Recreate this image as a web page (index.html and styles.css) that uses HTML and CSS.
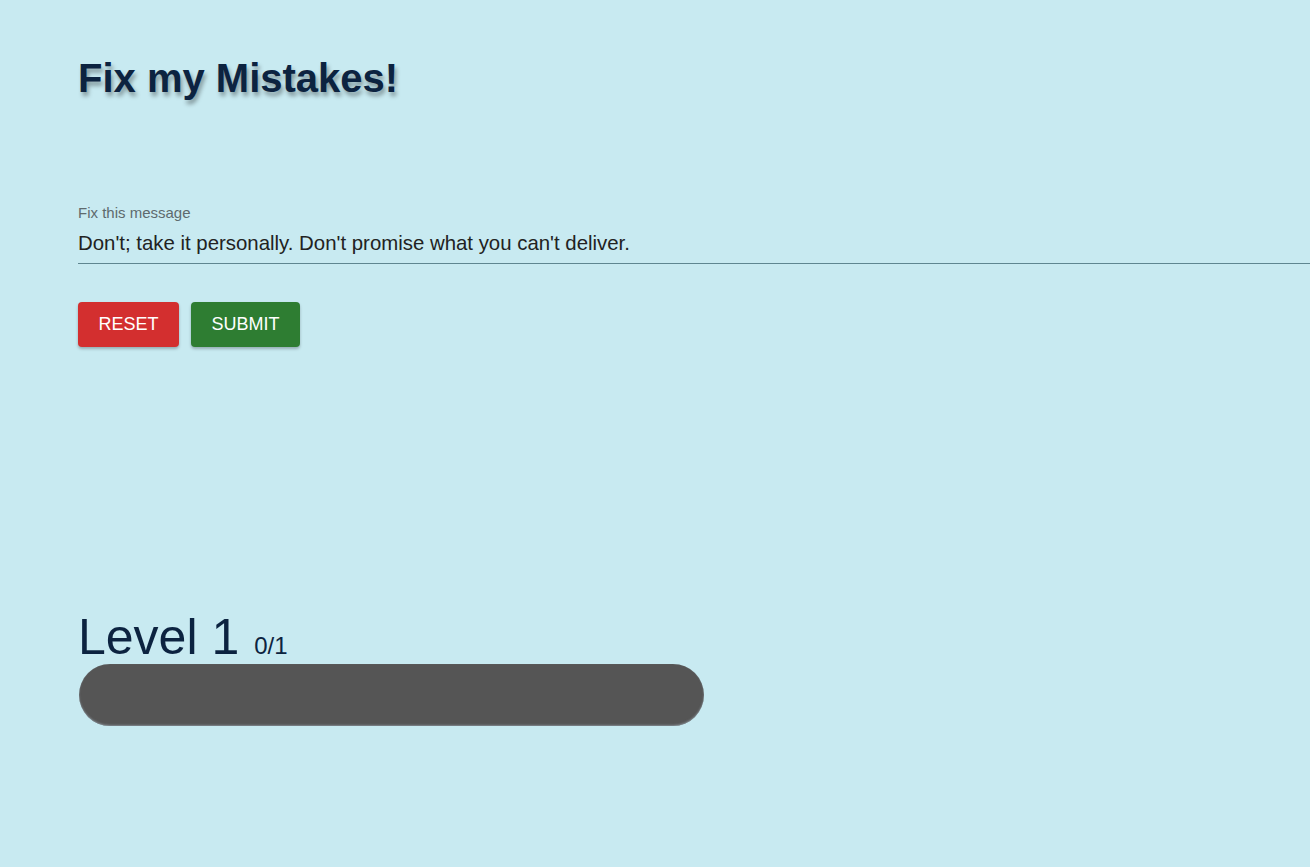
FILE: index.html
```html
<!DOCTYPE html>
<html>
<head>
<meta charset="utf-8">
<link rel="stylesheet" href="styles.css">
</head>
<body>
<main class="page">
  <h1 class="title">Fix my Mistakes!</h1>
  <div class="field">
    <label class="field-label" for="msg">Fix this message</label>
    <input id="msg" class="field-input" type="text" value="Don't; take it personally. Don't promise what you can't deliver.">
  </div>
  <div class="actions">
    <button class="btn btn-reset">RESET</button>
    <button class="btn btn-submit">SUBMIT</button>
  </div>
  <section class="level">
    <div class="level-head"><span class="level-name">Level 1</span><span class="level-count">0/1</span></div>
    <div class="progress"></div>
  </section>
</main>
</body>
</html>
```
FILE: styles.css
```css
html, body {
  margin: 0;
  padding: 0;
  background: #c8eaf1;
  font-family: "Liberation Sans", Arial, sans-serif;
}
.page {
  padding: 54px 0 0 78px;
}
.title {
  margin: 0;
  font-size: 40px;
  font-weight: bold;
  color: #0c2340;
  line-height: 48px;
  text-shadow: 2px 4px 4px rgba(0, 0, 0, 0.35);
}
.field {
  margin-top: 103px;
  display: flex;
  flex-direction: column;
}
.field-label {
  font-size: 15px;
  color: #5e6a6e;
  line-height: 16px;
}
.field-input {
  margin-top: 7px;
  font-family: "Liberation Sans", Arial, sans-serif;
  font-size: 20.4px;
  color: #222;
  background: transparent;
  border: none;
  border-bottom: 1px solid #5f8690;
  padding: 4px 0 8px 0;
  outline: none;
}
.actions {
  margin-top: 38px;
  display: flex;
  gap: 12px;
}
.btn {
  height: 45px;
  border: none;
  border-radius: 4px;
  color: #fff;
  font-family: "Liberation Sans", Arial, sans-serif;
  font-size: 18px;
  padding: 0 20px;
  box-shadow: 0 2px 3px rgba(0, 0, 0, 0.25);
}
.btn-reset {
  background: #d32f2f;
  width: 101px;
}
.btn-submit {
  background: #2e7d32;
  width: 109px;
}
.level {
  margin-top: 270px;
}
.level-head {
  display: flex;
  align-items: baseline;
  gap: 15px;
  color: #0c2340;
  line-height: 40px;
}
.level-name {
  font-size: 50px;
}
.level-count {
  font-size: 24px;
}
.progress {
  margin-top: -2px;
  margin-left: 1px;
  width: 625px;
  height: 62px;
  border-radius: 31px;
  background: #555555;
  box-shadow: inset 0 -1px 2px rgba(150, 160, 170, 0.7);
}
```
